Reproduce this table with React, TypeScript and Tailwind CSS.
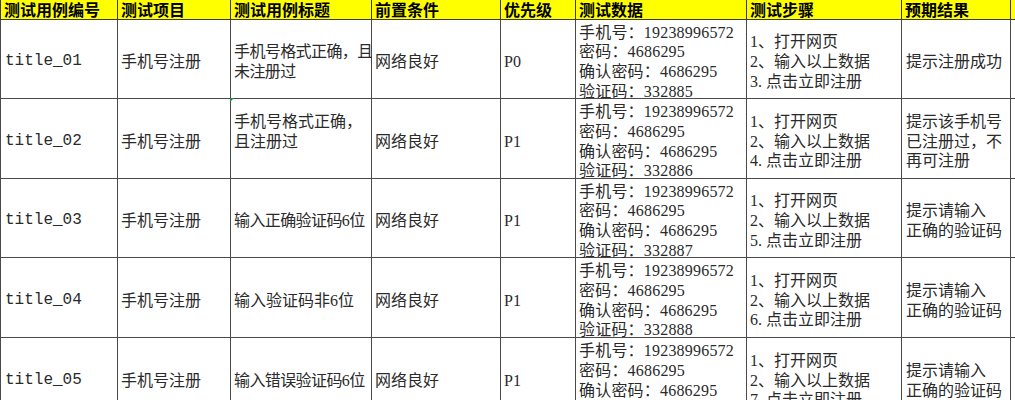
import React from 'react';

type CaseRow = {
  id: string;
  project: string;
  title: string[];
  pre: string;
  priority: string;
  code: string;
  lastStep: string;
  expect: string[];
  flag?: boolean;
};

const rows: CaseRow[] = [
  {
    id: 'title_01',
    project: '手机号注册',
    title: ['手机号格式正确，且', '未注册过'],
    pre: '网络良好',
    priority: 'P0',
    code: '332885',
    lastStep: '3. 点击立即注册',
    expect: ['提示注册成功'],
  },
  {
    id: 'title_02',
    project: '手机号注册',
    title: ['手机号格式正确，', '且注册过', '\u00a0'],
    pre: '网络良好',
    priority: 'P1',
    code: '332886',
    lastStep: '4. 点击立即注册',
    expect: ['提示该手机号', '已注册过，不', '再可注册'],
    flag: true,
  },
  {
    id: 'title_03',
    project: '手机号注册',
    title: ['输入正确验证码6位'],
    pre: '网络良好',
    priority: 'P1',
    code: '332887',
    lastStep: '5. 点击立即注册',
    expect: ['提示请输入', '正确的验证码'],
  },
  {
    id: 'title_04',
    project: '手机号注册',
    title: ['输入验证码非6位'],
    pre: '网络良好',
    priority: 'P1',
    code: '332888',
    lastStep: '6. 点击立即注册',
    expect: ['提示请输入', '正确的验证码'],
  },
  {
    id: 'title_05',
    project: '手机号注册',
    title: ['输入错误验证码6位'],
    pre: '网络良好',
    priority: 'P1',
    code: '332889',
    lastStep: '7. 点击立即注册',
    expect: ['提示请输入', '正确的验证码'],
  },
];

const headers = ['测试用例编号', '测试项目', '测试用例标题', '前置条件', '优先级', '测试数据', '测试步骤', '预期结果', ''];

const headCell =
  "flex items-center pl-[3px] bg-[#ffff00] border-r border-b border-[#3a3a3a] font-['Noto_Sans_CJK_SC',sans-serif] font-bold text-[16px] leading-[19px] text-black whitespace-nowrap";
const cell =
  'relative flex items-center pl-[3px] pt-[6px] border-r border-b border-[#4a4a4a] bg-white text-[16px] leading-[19.75px] text-[#2a2a2a] whitespace-nowrap';

const Lines = ({ lines, className = '' }: { lines: string[]; className?: string }) => (
  <div className={className}>
    {lines.map((l, i) => (
      <div key={i}>{l}</div>
    ))}
  </div>
);

export default function App() {
  return (
    <div className="w-[1015px] h-[400px] overflow-hidden bg-white font-['Liberation_Serif','Noto_Sans_CJK_SC',serif]">
      <div className="grid grid-cols-[118px_113px_141px_129px_75px_171px_155px_109px_1fr] grid-rows-[20px_79px_80px_79px_80px_80px]">
        {headers.map((h, i) => (
          <div key={i} className={`${headCell} ${i === 0 ? 'border-l' : ''} ${i === 8 ? 'border-r-0' : ''}`}>
            {h}
          </div>
        ))}

        {rows.map((r) => (
          <React.Fragment key={r.id}>
            <div className={`${cell} border-l font-['Liberation_Mono',monospace] text-[13.4px] pl-[4px]`}>{r.id}</div>
            <div className={`${cell} text-[14.5px] pl-[3px]`}>{r.project}</div>
            <div className={cell}>
              {r.flag && (
                <span className="absolute -left-px -top-px w-0 h-0 border-t-[4px] border-r-[4px] border-t-[#1e8e3e] border-r-transparent" />
              )}
              <Lines lines={r.title} className={r.title[0].length > 8 ? 'tracking-[-0.6px]' : ''} />
            </div>
            <div className={cell}>{r.pre}</div>
            <div className={`${cell} pl-[2px]`}>{r.priority}</div>
            <div className={`${cell} pl-[2px]`}>
              <Lines
                lines={[
                  '手机号：19238996572',
                  '密码：4686295',
                  '确认密码：4686295',
                  `验证码：${r.code}`,
                ]}
                className="tracking-[0.2px]"
              />
            </div>
            <div className={cell}>
              <Lines lines={['1、打开网页', '2、输入以上数据', r.lastStep]} />
            </div>
            <div className={`${cell} pl-[4px]`}>
              <Lines lines={r.expect} />
            </div>
            <div className="border-b border-[#4a4a4a] bg-white" />
          </React.Fragment>
        ))}
      </div>
    </div>
  );
}
